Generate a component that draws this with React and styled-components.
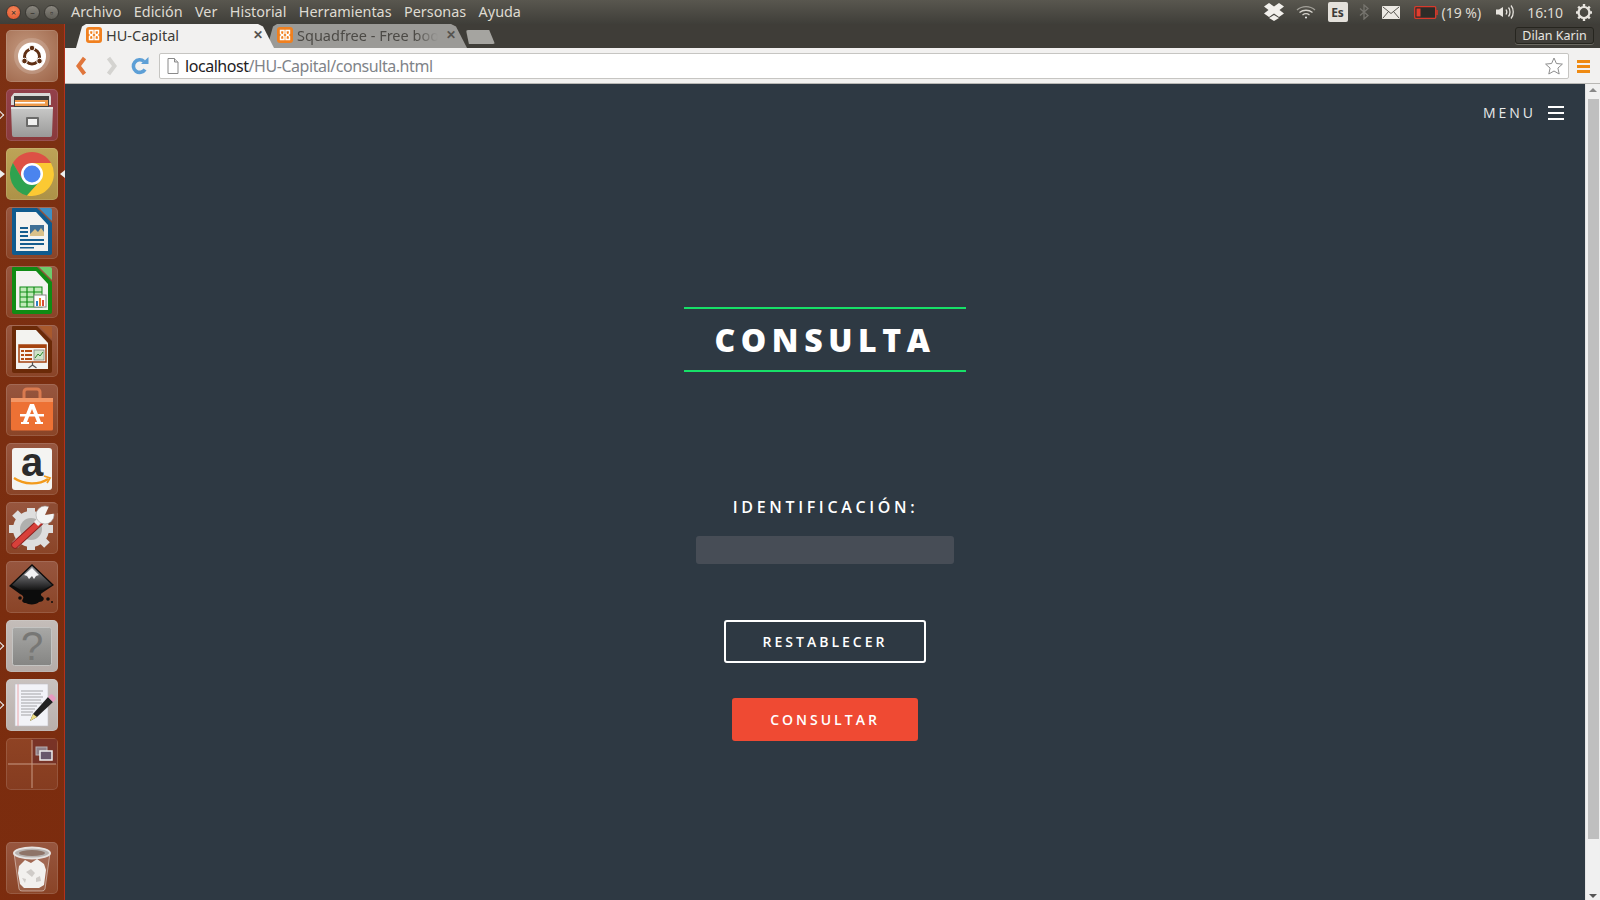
import React from "react";
import styled, { createGlobalStyle } from "styled-components";

const Global = createGlobalStyle`
  html, body { margin: 0; padding: 0; width: 1600px; height: 900px; overflow: hidden; background: #2e3943; }
  * { box-sizing: border-box; }
  svg { flex: none; display: block; }
`;

const Desktop = styled.div`
  width: 1600px; height: 900px; display: flex; flex-direction: column;
  font-family: "Noto Sans", "Open Sans", sans-serif; overflow: hidden;
`;
const Panel = styled.header`
  height: 24px; flex: none; display: flex; align-items: center; padding-left: 6px;
  background: linear-gradient(#59574f, #3f3e39); color: #dfdbd2; font-size: 14px;
`;
const WindowButtons = styled.div`display: flex; gap: 4px; width: 65px; align-items: center;`;
const WinBtn = styled.span`
  width: 15px; height: 15px; border-radius: 50%; display: flex; align-items: center; justify-content: center;
  background: ${p => p.$close ? "radial-gradient(circle at 50% 35%, #f58a5c, #e2502a)" : "linear-gradient(#8a877f, #5f5d56)"};
  border: 1px solid #3a3833; color: #33302b; font-size: 9px; line-height: 1;
`;
const Menu = styled.nav`display: flex; gap: 12.4px;`;
const MenuItem = styled.span`line-height: 24px; font-size: 14.4px;`;
const Tray = styled.div`margin-left: auto; display: flex; align-items: center; height: 24px; padding-right: 7px;`;
const TrayItem = styled.span`
  display: flex; align-items: center; margin-left: ${p => p.$gap}px; font-size: 14px; color: #dfdbd2; white-space: nowrap;
`;
const LangBadge = styled.span`
  width: 20px; height: 20px; background: #e4e1db; color: #3c3b37; border-radius: 2px; font-size: 12px; font-weight: 700;
  display: flex; align-items: center; justify-content: center;
`;

const Body = styled.div`flex: 1; display: flex; min-height: 0;`;
const Launcher = styled.aside`
  width: 65px; flex: none; display: flex; flex-direction: column; gap: 7px; padding: 6px 0 6px 6px;
  background: linear-gradient(135deg, #7d3113, #7a2d0f 60%, #7c2c0e); border-right: 1px solid #b3321c;
`;
const Tile = styled.div`
  position: relative; width: 52px; height: 52px; flex: none; border-radius: 5px; display: flex; align-items: center; justify-content: center;
  background: ${p => p.$tint || "linear-gradient(#97563f, #8a4427)"};
  box-shadow: inset 0 0 0 1px rgba(255,255,255,.12);
  margin-top: ${p => p.$push ? "auto" : "0"};
`;
const Pip = styled.i`
  position: absolute; top: 50%; margin-top: -4px; width: 0; height: 0; border-style: solid;
  ${p => p.$right
    ? "right: -7px; border-width: 4px 5px 4px 0; border-color: transparent #eee transparent transparent;"
    : "left: -6px; border-width: 4px 0 4px 5px; border-color: transparent transparent transparent #eee;"}
`;
const HollowPip = styled.i`
  position: absolute; top: 50%; left: -9px; margin-top: -3px; width: 6px; height: 6px; display: block;
  border-top: 1px solid #eee; border-right: 1px solid #eee; transform: rotate(45deg);
`;

const Browser = styled.div`flex: 1; display: flex; flex-direction: column; min-width: 0;`;
const TabStrip = styled.div`
  height: 24px; flex: none; display: flex; align-items: flex-end; padding-left: 11px; background: #3f3d38; position: relative;
`;
const Tab = styled.div`
  height: 24px; width: ${p => p.$w}px; margin-right: ${p => p.$mr}px; flex: none; display: flex; align-items: center; gap: 4px;
  padding: 0 11px 2px ${p => p.$pl}px; font-size: 14.5px; overflow: hidden; white-space: nowrap;
  color: ${p => p.$active ? "#3c3b37" : "#4c4a46"};
  background: ${p => p.$active ? "#f2f1f0" : "#9b9a97"};
  clip-path: polygon(0 100%, 6px 10%, 10px 0, calc(100% - 16px) 0, calc(100% - 11px) 10%, 100% 100%);
  z-index: ${p => p.$active ? 2 : 1};
`;
const TabTitle = styled.span`flex: 1; overflow: hidden; margin-right: 4px;
  ${p => p.$fade && "-webkit-mask-image: linear-gradient(90deg, #000 84%, transparent);"}`;
const TabClose = styled.span`font-size: 12px; color: #55534f; font-weight: 700; line-height: 1;`;
const NewTab = styled.div`
  width: 29px; height: 14px; margin: 0 0 4px -1px; background: #a5a4a0;
  clip-path: polygon(0 0, 80% 0, 100% 100%, 10% 100%); border-radius: 2px;
`;
const UserBadge = styled.div`
  position: absolute; right: 6px; top: 3px; width: 79px; height: 17px; border: 1px solid #26251f; border-radius: 3px;
  box-shadow: 0 1px 0 #6a6860;
  color: #e8e6e1; font-size: 12.5px; display: flex; align-items: center; justify-content: center;
`;
const Toolbar = styled.div`
  height: 36px; flex: none; display: flex; align-items: center; background: #f2f1f0; padding: 1px 0 0 9px; border-bottom: 1px solid #b8b7b4;
`;
const NavSlot = styled.span`width: ${p => p.$w}px; flex: none; display: flex; align-items: center;`;
const Omnibox = styled.div`
  width: 1410px; height: 26px; flex: none; display: flex; align-items: center; background: #fff; border: 1px solid #c6c5c2; border-radius: 2px;
  padding: 0 5px 0 7px; font-size: 16px; letter-spacing: -0.45px;
`;
const Host = styled.span`color: #23211e; margin-left: 6px;`;
const Path = styled.span`color: #7f8489; flex: 1;`;
const MenuWrap = styled.span`margin-left: 8px; display: flex;`;

const ViewportRow = styled.div`flex: 1; display: flex; min-height: 0;`;
const Page = styled.main`
  flex: 1; min-width: 0; background: #2e3943; display: flex; flex-direction: column; align-items: center;
  font-family: "Open Sans", sans-serif; color: #fff; position: relative;
`;
const PageHeader = styled.div`
  align-self: stretch; display: flex; justify-content: flex-end; align-items: center; gap: 12px; padding: 3px 21px 0 0; height: 54px;
`;
const MenuLabel = styled.span`font-size: 14px; letter-spacing: 3px; color: #e8e9ea; line-height: 14px;`;
const Bars = styled.span`
  width: 16px; height: 14px; display: block; border-top: 2px solid #fff; border-bottom: 2px solid #fff; position: relative;
  &::after { content: ""; position: absolute; left: 0; right: 0; top: 4px; height: 2px; background: #fff; }
`;
const Title = styled.h1`
  width: 282px; height: 65px; margin: 169px 0 0; border-top: 2px solid #17e068; border-bottom: 2px solid #17e068;
  display: flex; align-items: center; justify-content: center; font-size: 32px; font-weight: 800; letter-spacing: 5.6px;
`;
const Label = styled.label`
  margin-top: 124px; font-size: 16px; font-weight: 600; letter-spacing: 3.65px; line-height: 22px; padding-left: 1px;
`;
const Input = styled.input`
  display: block; width: 258px; height: 28px; margin-top: 18px; border: 0; border-radius: 3px; background: #474d56; padding: 0 8px;
`;
const GhostButton = styled.button`
  width: 202px; height: 43px; margin-top: 56px; background: transparent; border: 2px solid #fff; border-radius: 3px; color: #fff;
  font: 600 14px "Open Sans", sans-serif; letter-spacing: 3px; padding: 0;
`;
const SolidButton = styled.button`
  width: 186px; height: 43px; margin-top: 35px; background: #ef4a33; border: 0; border-radius: 3px; color: #fff;
  font: 600 14px "Open Sans", sans-serif; letter-spacing: 3px; padding: 0;
`;
const Scrollbar = styled.div`
  width: 15px; flex: none; background: #f0f0f0; display: flex; flex-direction: column; align-items: center; padding: 4px 0 2px;
  border-left: 1px solid #e4e4e4;
`;
const Thumb = styled.div`width: 11px; flex: none; height: 740px; background: #bfbfbf; margin-top: 7px;`;
const Arrow = styled.i`
  width: 0; height: 0; border-left: 4px solid transparent; border-right: 4px solid transparent; display: block;
  ${p => p.$down ? "border-top: 4px solid #555; margin-top: auto;" : "border-bottom: 4px solid #888;"}
`;

const Xampp = () => (
  <svg width="16" height="16" viewBox="0 0 16 16"><rect width="16" height="16" rx="3" fill="#f0801f" />
    <path d="M3.500 3.500h3.500v3L5.500 8 7 9.500v3H3.500v-3L5 8 3.500 6.500zM12.500 3.500H9v3L10.500 8 9 9.500v3h3.500v-3L11 8l1.500-1.500z" fill="none" stroke="#fff" strokeWidth="1.400" /></svg>
);
const Dropbox = () => (
  <svg width="20" height="18" viewBox="0 0 20 18" fill="#f2f0ec"><path d="M5 0l5 3.500L15 0l5 3.500L15.500 7 20 10.500 15 14l-5-3.500L5 14 0 10.500 4.500 7 0 3.500z" /><path d="M5 15l5-3 5 3-5 3z" /></svg>
);
const Wifi = () => (
  <svg width="20" height="14" viewBox="0 0 20 14" fill="none" stroke="#d8d5ce" strokeWidth="1.300"><path d="M1 5c5-4.500 13-4.500 18 0" opacity=".6" /><path d="M3.500 7.500c3.800-3 9.200-3 13 0" /><path d="M6.500 10c2-1.500 5-1.500 7 0" /><circle cx="10" cy="12.500" r="1" fill="#eee" stroke="none" /></svg>
);
const Bluetooth = () => (
  <svg width="10" height="16" viewBox="0 0 10 16" fill="none" stroke="#77756f" strokeWidth="1.300"><path d="M1 4.500l8 7L5 15V1l4 3.500-8 7" /></svg>
);
const Mail = () => (
  <svg width="18" height="13" viewBox="0 0 18 13"><rect width="18" height="13" rx="1" fill="#ece9e3" /><path d="M1 1l8 6.500L17 1M1 12l5.500-6.500M17 12l-5.500-6.500" stroke="#55534d" strokeWidth="1" fill="none" /></svg>
);
const Battery = () => (
  <svg width="24" height="13" viewBox="0 0 24 13"><rect x=".7" y=".7" width="21" height="11.600" rx="1" fill="#2d2c28" stroke="#d83a2c" strokeWidth="1.300" /><rect x="2.500" y="2.500" width="4" height="8" fill="#e03d2e" /><rect x="22" y="4" width="2" height="5" fill="#b83a2c" /></svg>
);
const Volume = () => (
  <svg width="20" height="16" viewBox="0 0 20 16" fill="none" stroke="#e6e3dd" strokeWidth="1.300"><path d="M1 5.500h3L8 3v10L4 10.500H1z" fill="#e6e3dd" stroke="none" /><path d="M11 5.500c1 1.500 1 3.500 0 5M13.500 3.500c2 2.500 2 6.500 0 9M16 1.500c3 3.500 3 9.500 0 13" /></svg>
);
const Power = () => (
  <svg width="18" height="18" viewBox="0 0 18 18"><circle cx="9" cy="9.500" r="5.500" fill="none" stroke="#e8e5df" strokeWidth="2.200" /><g stroke="#e8e5df" strokeWidth="2.400"><path d="M9 1v4M9 14v4M1 9.500h3.500M13.500 9.500H17M3.200 3.700l2.400 2.400M12.400 12.900l2.400 2.400M14.800 3.700l-2.400 2.400M5.600 12.900l-2.400 2.400" /></g></svg>
);
const Back = () => (
  <svg width="14" height="20" viewBox="0 0 14 20"><path d="M10.500 2L4.500 10l6 8" fill="none" stroke="#e0763c" strokeWidth="4" /></svg>
);
const Forward = () => (
  <svg width="14" height="20" viewBox="0 0 14 20"><path d="M3.500 2l6 8-6 8" fill="none" stroke="#d4d3d0" strokeWidth="4" /></svg>
);
const Reload = () => (
  <svg width="18" height="18" viewBox="0 0 18 18"><path d="M14 12.500A6.300 6.300 0 1 1 13 4.500" fill="none" stroke="#5d9fd6" strokeWidth="3.600" /><path d="M10 7h7.500V0z" fill="#5d9fd6" /></svg>
);
const Doc = () => (
  <svg width="12" height="16" viewBox="0 0 12 16"><path d="M1 .5h6.500L11 4v11.500H1z" fill="#fff" stroke="#8a8a8a" /><path d="M7.500 .5V4H11" fill="#ddd" stroke="#8a8a8a" /></svg>
);
const Star = () => (
  <svg width="18" height="18" viewBox="0 0 18 18"><path d="M9 1l2.400 5.500 6 .6-4.500 4 1.300 5.900L9 14l-5.200 3 1.300-5.900-4.500-4 6-.6z" fill="#fff" stroke="#8d8d8d" strokeWidth="1" /></svg>
);
const ChromeMenu = () => (
  <svg width="13" height="13" viewBox="0 0 13 13" fill="#ef8a12"><rect width="13" height="3" /><rect y="5" width="13" height="3" /><rect y="10" width="13" height="3" /></svg>
);

const UbuntuIcon = () => (
  <svg width="52" height="52" viewBox="0 0 52 52"><circle cx="26" cy="26" r="18" fill="#f4ebe4" opacity=".2" /><circle cx="26" cy="26.500" r="14" fill="#fff" /><circle cx="26" cy="26.500" r="7.500" fill="none" stroke="#5e2f14" strokeWidth="3" /><g fill="#5e2f14" stroke="#fff" strokeWidth="1"><circle cx="26" cy="18" r="2.800" /><circle cx="18.500" cy="31" r="2.800" /><circle cx="33.500" cy="31" r="2.800" /></g></svg>
);
const FilesIcon = () => (
  <svg width="52" height="52" viewBox="0 0 52 52">
    <defs><linearGradient id="cab" x1="0" y1="0" x2="0" y2="1"><stop offset="0" stopColor="#c9c9c8" /><stop offset="1" stopColor="#9a9a99" /></linearGradient></defs>
    <path d="M8 4h36l1 4v8H5V8z" fill="#d8d8d6" /><rect x="8" y="7" width="35" height="13" fill="#3e3e3e" />
    <rect x="9" y="11" width="33" height="6" fill="#ee9a4a" /><rect x="9" y="13" width="30" height="1.500" fill="#fff" />
    <path d="M5 18h42l-1 28a2 2 0 0 1-2 2H8a2 2 0 0 1-2-2z" fill="url(#cab)" /><rect x="5" y="18" width="42" height="2" fill="#e3e3e1" />
    <rect x="20" y="28" width="13" height="10" rx="1" fill="#6a6a69" /><rect x="22" y="30" width="9" height="6" fill="#f1f1f0" />
  </svg>
);
const ChromeIcon = () => (
  <svg width="52" height="52" viewBox="0 0 52 52"><path d="M26 15L45 15A22 22 0 0 0 6.900 15L16.500 31.500Z" fill="#dd5145" /><path d="M16.500 31.500L6.900 15A22 22 0 0 0 21 47.400L35.500 31.500Z" fill="#2ea24f" /><path d="M35.500 31.500L21 47.400A22 22 0 0 0 45 15L26 15Z" fill="#fbc933" /><circle cx="26" cy="26" r="11" fill="#fff" /><circle cx="26" cy="26" r="8.500" fill="#4b84ee" /></svg>
);
const OfficeDoc = ({ edge, corner, children }) => (
  <svg width="52" height="52" viewBox="0 0 52 52"><path d="M6 2a1 1 0 0 1 1-1h24l15 15v30a2 2 0 0 1-2 2H8a2 2 0 0 1-2-2z" fill={edge} /><path d="M33 1h11a2 2 0 0 1 2 2v11z" fill={corner} /><path d="M10 5h20l12 13v26H10z" fill="#f3f3f0" />{children}</svg>
);
const WriterIcon = () => (
  <OfficeDoc edge="#0f5b8e" corner="#3f8fc2"><g fill="#155e8f"><rect x="14" y="20" width="8" height="2" /><rect x="14" y="24" width="8" height="2" /><rect x="14" y="28" width="8" height="2" /><rect x="14" y="32" width="24" height="2" /><rect x="14" y="36" width="24" height="2" /><rect x="14" y="40" width="14" height="1.500" /></g><rect x="24" y="18" width="14" height="11" fill="#3e6f96" /><path d="M24 27l5-5 3 3 3-4 3 4v4H24z" fill="#d9c189" /></OfficeDoc>
);
const CalcIcon = () => (
  <OfficeDoc edge="#118b14" corner="#6ecb6c"><rect x="14" y="21" width="22" height="20" fill="#c0eab8" stroke="#0f8c14" strokeWidth="1" /><path d="M14 26h22M14 31h22M14 36h22M21 21v20M28 21v20" stroke="#0f8c14" strokeWidth="1.200" /><rect x="28" y="29" width="12" height="12" fill="#fff" stroke="#888" /><rect x="30" y="35" width="2" height="5" fill="#2d7fc4" /><rect x="33" y="32" width="2" height="8" fill="#e98126" /><rect x="36" y="34" width="2" height="6" fill="#d64c3a" /></OfficeDoc>
);
const ImpressIcon = () => (
  <OfficeDoc edge="#6b2a08" corner="#a9592c"><rect x="13" y="20" width="27" height="17" fill="#f8f3ee" stroke="#a5430f" strokeWidth="1.500" /><rect x="13" y="20" width="27" height="3" fill="#a5430f" /><g fill="#b34c14"><rect x="15" y="25" width="3" height="2" /><rect x="15" y="29" width="3" height="2" /><rect x="15" y="33" width="3" height="2" /><rect x="19" y="25" width="7" height="2" /><rect x="19" y="29" width="7" height="2" /><rect x="19" y="33" width="7" height="2" /></g><rect x="28" y="25" width="10" height="10" fill="#cfe3c8" stroke="#777" strokeWidth=".7" /><path d="M29 33l3-4 2 2 3-4" stroke="#2e8b2e" fill="none" /><path d="M26.500 37v3M26.500 40l-4 3M26.500 40l4 3" stroke="#555" strokeWidth="1.200" /></OfficeDoc>
);
const StoreIcon = () => (
  <svg width="52" height="52" viewBox="0 0 52 52"><path d="M18 14v-6a3 3 0 0 1 3-3h10a3 3 0 0 1 3 3v6" fill="none" stroke="#d97a4f" strokeWidth="3" /><path d="M5 14h42l0 31a1.500 1.500 0 0 1-1.500 1.500h-39A1.500 1.500 0 0 1 5 45z" fill="#ed7134" /><path d="M5 14h42v4H5z" fill="#f29766" /><path d="M24 20h4l7 18h-4l-5-13-5 13h-4z" fill="#fff" /><rect x="14" y="30" width="24" height="2.500" fill="#fff" /><rect x="15" y="38" width="8" height="2" fill="#fff" /><rect x="29" y="38" width="8" height="2" fill="#fff" /></svg>
);
const AmazonLetter = styled.text`font: 700 40px "Liberation Sans", sans-serif; fill: #2b2b2b;`;
const AmazonIcon = () => (
  <svg width="52" height="52" viewBox="0 0 52 52"><rect x="6" y="5" width="40" height="42" rx="3" fill="#f4f4f2" /><AmazonLetter x="15" y="33">a</AmazonLetter><path d="M8 35c10 7 25 7 34 1" fill="none" stroke="#f29a1c" strokeWidth="2.200" /><path d="M38 33l6 2-3 5" fill="none" stroke="#f29a1c" strokeWidth="1.800" /></svg>
);
const ToolsIcon = () => (
  <svg width="52" height="52" viewBox="0 0 52 52"><g stroke="#dedede" strokeWidth="8"><path d="M25 6v42M3 27h44M9 11l32 32M41 11L9 43" /></g><circle cx="25" cy="27" r="18" fill="#dedede" /><circle cx="25" cy="27" r="11" fill="#b0b0ae" /><path d="M9 43L34 20" stroke="#8c2320" strokeWidth="7.500" strokeLinecap="round" /><path d="M9 43L34 20" stroke="#d8403a" strokeWidth="5.500" strokeLinecap="round" /><path d="M30 22l3.500-3.500" stroke="#eee" strokeWidth="6" /><circle cx="39" cy="13" r="9" fill="#f4f4f4" stroke="#a8a8a8" strokeWidth=".6" /><path d="M39 13L44 2h8v9z" fill="#8d4c33" /></svg>
);
const InkscapeIcon = () => (
  <svg width="52" height="52" viewBox="0 0 52 52">
    <defs><linearGradient id="ink" x1="0" y1="0" x2="0" y2="1"><stop offset="0" stopColor="#9a9a9f" /><stop offset="1" stopColor="#141414" /></linearGradient></defs>
    <path d="M26 3L48 24 36 32c-2 1-1 3 1 4 2 2 0 5-4 5-2 3-11 3-13 1-3 0-5-2-3-4 1-2 0-4-3-5L3 25z" fill="#0c0c0c" /><path d="M26 5L46 24l-9 5H15L6 24z" fill="url(#ink)" /><path d="M26 7l7 7-3 1-2 3-2-3-3 3-2-3-3-1z" fill="#f2f2f4" /><circle cx="14" cy="37" r="1.800" fill="#0c0c0c" /><circle cx="42" cy="38" r="1.800" fill="#0c0c0c" /><circle cx="46" cy="41" r="1" fill="#0c0c0c" />
  </svg>
);
const HelpGlyph = styled.text`font: 400 40px "Liberation Sans", sans-serif; fill: #777775;`;
const HelpIcon = () => (
  <svg width="52" height="52" viewBox="0 0 52 52">
    <defs><linearGradient id="hp" x1="0" y1="0" x2="0" y2="1"><stop offset="0" stopColor="#a8a8a6" /><stop offset="1" stopColor="#858583" /></linearGradient></defs>
    <rect x="6.500" y="7.500" width="39" height="38" rx="2" fill="url(#hp)" stroke="#c4c4c2" /><HelpGlyph x="26" y="40" textAnchor="middle">?</HelpGlyph>
  </svg>
);
const GeditIcon = () => (
  <svg width="52" height="52" viewBox="0 0 52 52"><rect x="9" y="5" width="33" height="42" fill="#f2f3f8" stroke="#bfc0c5" strokeWidth=".6" /><path d="M12 5v42" stroke="#eca7ac" /><g stroke="#a3a3a6" strokeWidth="1"><path d="M15 12h22M15 15h20M15 18h22M15 21h20M15 24h21M15 27h16M15 30h14M15 33h12M15 36h10" /></g><path d="M24 42l3-7L42 18l5 5-16 15z" fill="#222" /><path d="M42 18l2-2a2 2 0 0 1 3 0l2 2a2 2 0 0 1 0 3l-2 2z" fill="#e79ac0" /><path d="M24 42l3-7 4 3z" fill="#ecdc82" /></svg>
);
const WorkspacesIcon = () => (
  <svg width="52" height="52" viewBox="0 0 52 52"><rect x="26" y="1" width="25" height="25" fill="#6a2a28" opacity=".6" /><path d="M2 26h48M26 2v48" stroke="#c89a84" strokeWidth="1" /><rect x="30" y="9" width="11" height="8" fill="#8f8088" stroke="#b8b0b4" /><rect x="34" y="13" width="12" height="9" fill="#68586c" stroke="#eee" strokeWidth="1.500" /></svg>
);
const TrashIcon = () => (
  <svg width="52" height="52" viewBox="0 0 52 52"><path d="M8 11l5 36a3 3 0 0 0 3 2h20a3 3 0 0 0 3-2l5-36z" fill="rgba(255,255,255,.14)" stroke="rgba(255,255,255,.45)" /><path d="M13 24l6-6 6 3 6-4 7 5 2 6-2 15-5 3H18l-4-4-2-11z" fill="#f2f0ee" /><path d="M20 30l5-3 4 4-3 4zM30 36l4-2 1 5-5 1zM16 36l4 1-1 4z" fill="#cfcbc8" /><ellipse cx="26" cy="11" rx="18" ry="5.500" fill="#b8b3b0" stroke="#e6e3e1" strokeWidth="2" /><ellipse cx="26" cy="11" rx="13" ry="3" fill="#8e7468" /></svg>
);

const tiles = [
  { icon: <UbuntuIcon />, tint: "radial-gradient(circle at 40% 40%, #c49a80, #9c6347)" },
  { icon: <FilesIcon />, tint: "linear-gradient(#93404a, #8a3a3c)", hollow: true },
  { icon: <ChromeIcon />, tint: "linear-gradient(#bda357, #ad9247)", pip: true, right: true },
  { icon: <WriterIcon /> },
  { icon: <CalcIcon /> },
  { icon: <ImpressIcon /> },
  { icon: <StoreIcon /> },
  { icon: <AmazonIcon /> },
  { icon: <ToolsIcon /> },
  { icon: <InkscapeIcon /> },
  { icon: <HelpIcon />, tint: "linear-gradient(#c4bdb9, #b5aca8)", hollow: true },
  { icon: <GeditIcon />, tint: "linear-gradient(#c9c2bf, #b9b0ac)", hollow: true },
  { icon: <WorkspacesIcon />, tint: "linear-gradient(#8f4324, #853c20)" },
  { icon: <TrashIcon />, push: true },
];

const menus = ["Archivo", "Edición", "Ver", "Historial", "Herramientas", "Personas", "Ayuda"];

export default function App() {
  return (
    <Desktop>
      <Global />
      <Panel>
        <WindowButtons>
          <WinBtn $close>×</WinBtn><WinBtn>–</WinBtn><WinBtn>▫</WinBtn>
        </WindowButtons>
        <Menu>{menus.map(m => <MenuItem key={m}>{m}</MenuItem>)}</Menu>
        <Tray>
          <Dropbox />
          <TrayItem $gap={12}><Wifi /></TrayItem>
          <TrayItem $gap={12}><LangBadge>Es</LangBadge></TrayItem>
          <TrayItem $gap={11}><Bluetooth /></TrayItem>
          <TrayItem $gap={13}><Mail /></TrayItem>
          <TrayItem $gap={14}><Battery /></TrayItem>
          <TrayItem $gap={4}>(19 %)</TrayItem>
          <TrayItem $gap={14}><Volume /></TrayItem>
          <TrayItem $gap={12}>16:10</TrayItem>
          <TrayItem $gap={12}><Power /></TrayItem>
        </Tray>
      </Panel>
      <Body>
        <Launcher>
          {tiles.map((t, i) => (
            <Tile key={i} $tint={t.tint} $push={t.push}>
              {t.pip && <Pip />}
              {t.hollow && <HollowPip />}
              {t.right && <Pip $right />}
              {t.icon}
            </Tile>
          ))}
        </Launcher>
        <Browser>
          <TabStrip>
            <Tab $active $w={198} $mr={-7} $pl={10}><Xampp /><TabTitle>HU-Capital</TabTitle><TabClose>✕</TabClose></Tab>
            <Tab $w={200} $mr={0} $pl={10}><Xampp /><TabTitle $fade>Squadfree - Free boo</TabTitle><TabClose>✕</TabClose></Tab>
            <NewTab />
            <UserBadge>Dilan Karin</UserBadge>
          </TabStrip>
          <Toolbar>
            <NavSlot $w={31}><Back /></NavSlot>
            <NavSlot $w={26}><Forward /></NavSlot>
            <NavSlot $w={28}><Reload /></NavSlot>
            <Omnibox>
              <Doc /><Host>localhost</Host><Path>/HU-Capital/consulta.html</Path><Star />
            </Omnibox>
            <MenuWrap><ChromeMenu /></MenuWrap>
          </Toolbar>
          <ViewportRow>
            <Page>
              <PageHeader><MenuLabel>MENU</MenuLabel><Bars /></PageHeader>
              <Title>CONSULTA</Title>
              <Label htmlFor="identificacion">IDENTIFICACIÓN:</Label>
              <Input id="identificacion" />
              <GhostButton>RESTABLECER</GhostButton>
              <SolidButton>CONSULTAR</SolidButton>
            </Page>
            <Scrollbar><Arrow /><Thumb /><Arrow $down /></Scrollbar>
          </ViewportRow>
        </Browser>
      </Body>
    </Desktop>
  );
}
